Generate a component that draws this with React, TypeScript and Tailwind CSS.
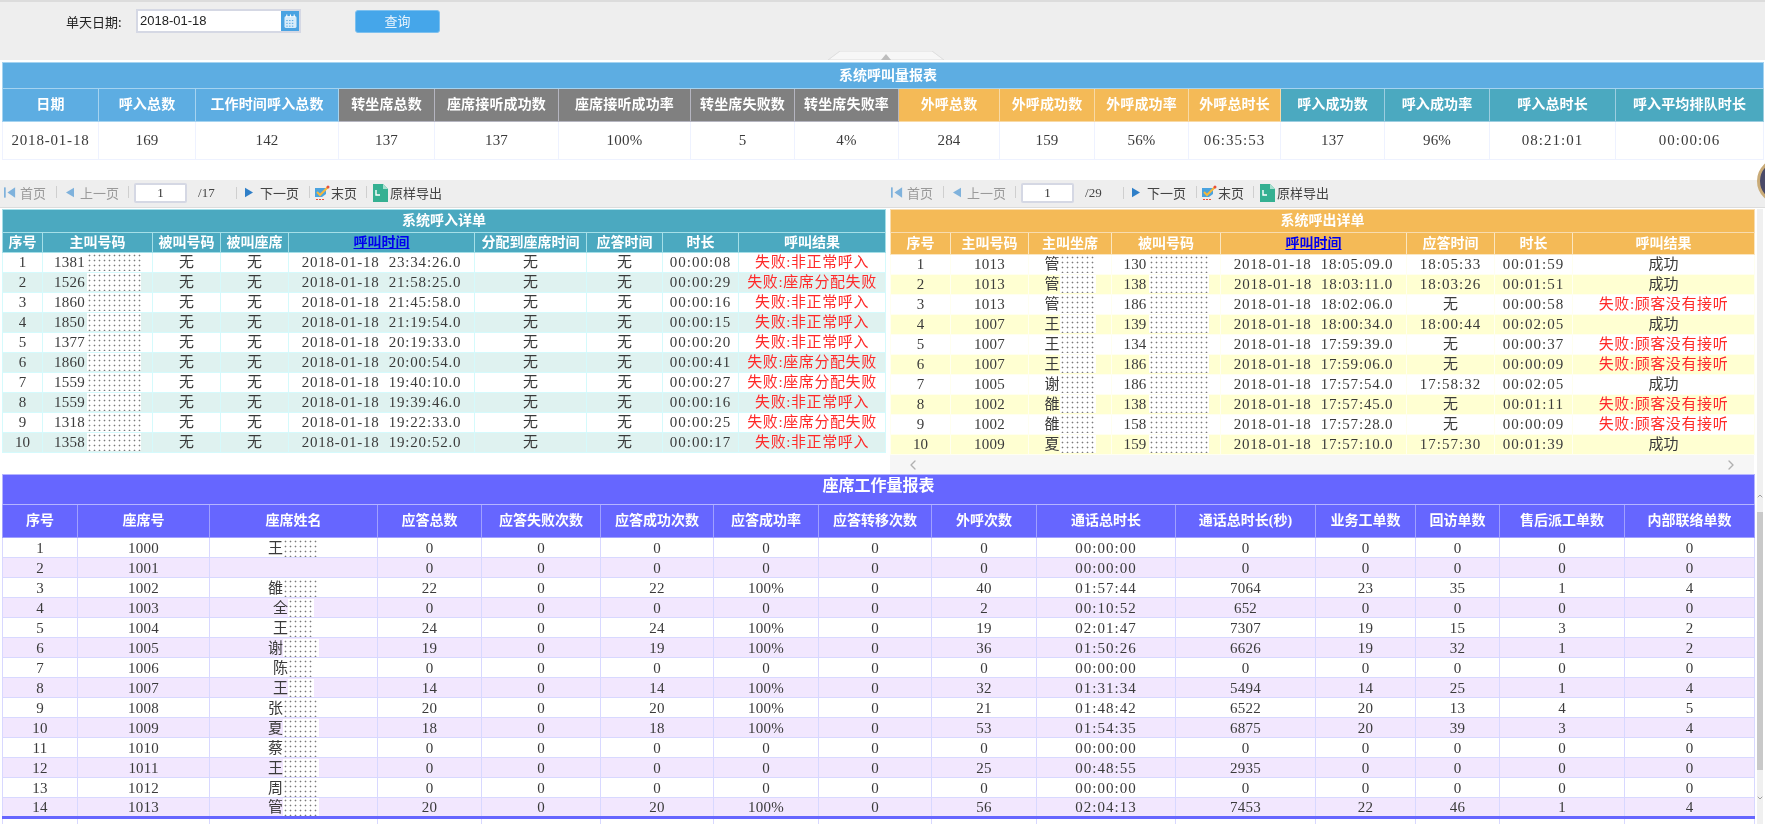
import React from "react";
import { ChevronLeft, ChevronRight, ChevronUp, ChevronDown } from "lucide-react";

const serif = "font-['Liberation_Serif','Noto_Sans_CJK_SC',serif]";

function tracking(s: string) {
  if (/^\d{4}-\d\d-\d\d/.test(s)) return "tracking-[0.8px]";
  if (/^\d\d:\d\d:\d\d/.test(s)) return "tracking-[1px]";
  if (/^\d/.test(s)) return "tracking-[0.2px]";
  return "";
}

function Txt({ v }: { v: string }) {
  return <span className={tracking(v)}>{v}</span>;
}

/* Masked fragment of a personal value, as blotted out in the picture */
function Mask({ w }: { w: string }) {
  return (
    <span
      className={`inline-block h-[18px] bg-white bg-[radial-gradient(circle,#7a7a7a_0.75px,transparent_1.1px)] bg-[length:5px_5px] ${w}`}
    />
  );
}

function Masked({ head, w }: { head: string; w: string }) {
  return (
    <span className="inline-flex h-[18px] align-top items-center justify-center tracking-[0.2px]">
      {head}
      <Mask w={w} />
    </span>
  );
}

function Fail({ v }: { v: string }) {
  return <span className="text-[#ff2a2a] tracking-[0.6px]">{v}</span>;
}

const FAIL_A = "失败:非正常呼入";
const FAIL_B = "失败:座席分配失败";
const FAIL_C = "失败:顾客没有接听";

const topCols = ["w-[96px]", "w-[97px]", "w-[143px]", "w-[96px]", "w-[124px]", "w-[132px]", "w-[104px]", "w-[104px]", "w-[101px]", "w-[95px]", "w-[94px]", "w-[92px]", "w-[104px]", "w-[105px]", "w-[126px]", "w-[148px]"];
const topHeads: [string, string][] = [
  ["日期", "bg-[#5dade2] border-[#a5d3f0]"],
  ["呼入总数", "bg-[#5dade2] border-[#a5d3f0]"],
  ["工作时间呼入总数", "bg-[#5dade2] border-[#a5d3f0]"],
  ["转坐席总数", "bg-[#808080] border-[#b5b5c0]"],
  ["座席接听成功数", "bg-[#808080] border-[#b5b5c0]"],
  ["座席接听成功率", "bg-[#808080] border-[#b5b5c0]"],
  ["转坐席失败数", "bg-[#808080] border-[#b5b5c0]"],
  ["转坐席失败率", "bg-[#808080] border-[#b5b5c0]"],
  ["外呼总数", "bg-[#f4ba57] border-[#f8d9a5]"],
  ["外呼成功数", "bg-[#f4ba57] border-[#f8d9a5]"],
  ["外呼成功率", "bg-[#f4ba57] border-[#f8d9a5]"],
  ["外呼总时长", "bg-[#f4ba57] border-[#f8d9a5]"],
  ["呼入成功数", "bg-[#4ba9c0] border-[#9ccde0]"],
  ["呼入成功率", "bg-[#4ba9c0] border-[#9ccde0]"],
  ["呼入总时长", "bg-[#4ba9c0] border-[#9ccde0]"],
  ["呼入平均排队时长", "bg-[#4ba9c0] border-[#9ccde0]"],
];
const topRow = ["2018-01-18", "169", "142", "137", "137", "100%", "5", "4%", "284", "159", "56%", "06:35:53", "137", "96%", "08:21:01", "00:00:06"];

const leftCols = ["w-[40px]", "w-[110px]", "w-[68px]", "w-[68px]", "w-[186px]", "w-[112px]", "w-[76px]", "w-[76px]", "w-[147px]"];
const leftHeads = ["序号", "主叫号码", "被叫号码", "被叫座席", "呼叫时间", "分配到座席时间", "应答时间", "时长", "呼叫结果"];
const leftRows: [string, string, string, string][] = [
  ["1381", "23:34:26.0", "00:00:08", FAIL_A],
  ["1526", "21:58:25.0", "00:00:29", FAIL_B],
  ["1860", "21:45:58.0", "00:00:16", FAIL_A],
  ["1850", "21:19:54.0", "00:00:15", FAIL_A],
  ["1377", "20:19:33.0", "00:00:20", FAIL_A],
  ["1860", "20:00:54.0", "00:00:41", FAIL_B],
  ["1559", "19:40:10.0", "00:00:27", FAIL_B],
  ["1559", "19:39:46.0", "00:00:16", FAIL_A],
  ["1318", "19:22:33.0", "00:00:25", FAIL_B],
  ["1358", "19:20:52.0", "00:00:17", FAIL_A],
];

const rightCols = ["w-[60px]", "w-[78px]", "w-[83px]", "w-[109px]", "w-[186px]", "w-[88px]", "w-[78px]", "w-[182px]"];
const rightHeads = ["序号", "主叫号码", "主叫坐席", "被叫号码", "呼叫时间", "应答时间", "时长", "呼叫结果"];
const rightRows: [string, string, string, string, string, string, string][] = [
  ["1013", "管", "130", "18:05:09.0", "18:05:33", "00:01:59", "成功"],
  ["1013", "管", "138", "18:03:11.0", "18:03:26", "00:01:51", "成功"],
  ["1013", "管", "186", "18:02:06.0", "无", "00:00:58", FAIL_C],
  ["1007", "王", "139", "18:00:34.0", "18:00:44", "00:02:05", "成功"],
  ["1007", "王", "134", "17:59:39.0", "无", "00:00:37", FAIL_C],
  ["1007", "王", "186", "17:59:06.0", "无", "00:00:09", FAIL_C],
  ["1005", "谢", "186", "17:57:54.0", "17:58:32", "00:02:05", "成功"],
  ["1002", "雒", "138", "17:57:45.0", "无", "00:01:11", FAIL_C],
  ["1002", "雒", "158", "17:57:28.0", "无", "00:00:09", FAIL_C],
  ["1009", "夏", "159", "17:57:10.0", "17:57:30", "00:01:39", "成功"],
];

const botCols = ["w-[75px]", "w-[132px]", "w-[168px]", "w-[104px]", "w-[119px]", "w-[113px]", "w-[105px]", "w-[113px]", "w-[105px]", "w-[139px]", "w-[140px]", "w-[100px]", "w-[84px]", "w-[125px]", "w-[130px]"];
const botHeads = ["序号", "座席号", "座席姓名", "应答总数", "应答失败次数", "应答成功次数", "应答成功率", "应答转移次数", "外呼次数", "通话总时长", "通话总时长(秒)", "业务工单数", "回访单数", "售后派工单数", "内部联络单数"];
const botRows: string[][] = [
  ["1", "1000", "王|3", "0", "0", "0", "0", "0", "0", "00:00:00", "0", "0", "0", "0", "0"],
  ["2", "1001", "", "0", "0", "0", "0", "0", "0", "00:00:00", "0", "0", "0", "0", "0"],
  ["3", "1002", "雒|3", "22", "0", "22", "100%", "0", "40", "01:57:44", "7064", "23", "35", "1", "4"],
  ["4", "1003", "全|2", "0", "0", "0", "0", "0", "2", "00:10:52", "652", "0", "0", "0", "0"],
  ["5", "1004", "王|2", "24", "0", "24", "100%", "0", "19", "02:01:47", "7307", "19", "15", "3", "2"],
  ["6", "1005", "谢|3", "19", "0", "19", "100%", "0", "36", "01:50:26", "6626", "19", "32", "1", "2"],
  ["7", "1006", "陈|2", "0", "0", "0", "0", "0", "0", "00:00:00", "0", "0", "0", "0", "0"],
  ["8", "1007", "王|2", "14", "0", "14", "100%", "0", "32", "01:31:34", "5494", "14", "25", "1", "4"],
  ["9", "1008", "张|3", "20", "0", "20", "100%", "0", "21", "01:48:42", "6522", "20", "13", "4", "5"],
  ["10", "1009", "夏|3", "18", "0", "18", "100%", "0", "53", "01:54:35", "6875", "20", "39", "3", "4"],
  ["11", "1010", "蔡|3", "0", "0", "0", "0", "0", "0", "00:00:00", "0", "0", "0", "0", "0"],
  ["12", "1011", "王|3", "0", "0", "0", "0", "0", "25", "00:48:55", "2935", "0", "0", "0", "0"],
  ["13", "1012", "周|3", "0", "0", "0", "0", "0", "0", "00:00:00", "0", "0", "0", "0", "0"],
  ["14", "1013", "管|3", "20", "0", "20", "100%", "0", "56", "02:04:13", "7453", "22", "46", "1", "4"],
];

function Sep() {
  return <span className="inline-block w-px h-[12px] bg-[#cfcfcf]" />;
}

function Pager({ total, width }: { total: string; width: string }) {
  return (
    <div className={`flex items-center h-full pb-[2px] text-[13px] leading-none font-['Noto_Sans_CJK_SC',sans-serif] ${width}`}>
      <svg viewBox="0 0 14 14" className="w-[12px] h-[13px] ml-[4px] shrink-0">
        <rect x="0" y="1" width="2" height="12" fill="#7fb2dc" />
        <path d="M13 1 L4 7 L13 13 Z" fill="#7fb2dc" />
      </svg>
      <span className="ml-[4px] w-[26px] text-[#9a9a9a]">首页</span>
      <span className="ml-[10px]"><Sep /></span>
      <svg viewBox="0 0 10 14" className="w-[8px] h-[13px] ml-[9px] shrink-0">
        <path d="M10 1 L0 7 L10 13 Z" fill="#7fb2dc" />
      </svg>
      <span className="ml-[6px] w-[39px] text-[#9a9a9a]">上一页</span>
      <span className="ml-[9px]"><Sep /></span>
      <span className={`ml-[5px] w-[53px] h-[20px] border-2 border-[#d5d8e4] rounded-[2px] bg-white flex items-center justify-center text-[13px] text-[#333] ${serif}`}>1</span>
      <span className={`ml-[11px] w-[38px] text-[13px] text-[#444] ${serif}`}>/{total}</span>
      <Sep />
      <svg viewBox="0 0 10 14" className="w-[8px] h-[13px] ml-[8px] shrink-0">
        <path d="M0 1 L10 7 L0 13 Z" fill="#2f7fc8" />
      </svg>
      <span className="ml-[7px] w-[39px] text-[#444]">下一页</span>
      <span className="ml-[10px]"><Sep /></span>
      <svg viewBox="0 0 16 16" className="w-[16px] h-[16px] ml-[4px] shrink-0">
        <path d="M1 3 H12 V9 L8 12 H1 Z" fill="#4aa3df" />
        <path d="M3 7 L6 10 L14 2" stroke="#f5b83d" strokeWidth="2" fill="none" />
        <circle cx="14" cy="2" r="1.5" fill="#e8503a" />
        <path d="M2 14.5 H11" stroke="#e8503a" strokeWidth="1" strokeDasharray="2 1" />
      </svg>
      <span className="ml-[1px] w-[26px] text-[#444]">末页</span>
      <span className="ml-[9px]"><Sep /></span>
      <svg viewBox="0 0 16 18" className="w-[16px] h-[18px] ml-[5px] shrink-0">
        <path d="M1 0 H11 L16 5 V18 H1 Z" fill="#35b092" />
        <path d="M11 0 L16 5 H11 Z" fill="#a8e0d0" />
        <path d="M4 6 V11 H8" stroke="#fff" strokeWidth="1.4" fill="none" />
      </svg>
      <span className="ml-[2px] text-[#444] whitespace-nowrap">原样导出</span>
    </div>
  );
}

function Reference() {
  return <a href="#" className="font-bold text-[#0000ee] underline">呼叫时间</a>;
}

export default function App() {
  return (
    <div className={`relative w-[1765px] h-[824px] overflow-hidden bg-white text-[#3a3a3a] blur-[0.45px] ${serif}`}>
      {/* Query bar */}
      <div className="relative h-[60px] border-t-2 border-[#dcdcdc] bg-[#eeeeee]">
        <div className="flex items-center pt-[7px] font-['Noto_Sans_CJK_SC',sans-serif]">
          <label className="ml-[66px] w-[70px] text-[13px] leading-[23px] text-[#222]">单天日期:</label>
          <div className="flex w-[165px] h-[24px] border-2 border-[#d5d8e4] bg-white">
            <input
              readOnly
              value="2018-01-18"
              className="w-[143px] pl-[2px] text-[13px] leading-[20px] text-[#222] font-['Liberation_Sans',sans-serif] outline-none bg-white"
            />
            <span className="flex-1 bg-[#4aa3e2] flex items-center justify-center">
              <svg viewBox="0 0 14 16" className="w-[13px] h-[15px]">
                <rect x="0.5" y="2" width="13" height="13" rx="2" fill="#d8ecfa" />
                <path d="M3 0.5 V3.5 M7 0.5 V3.5 M11 0.5 V3.5" stroke="#fff" strokeWidth="1.2" />
                <path d="M2.5 7 H11.5 M2.5 10 H11.5 M2.5 13 H11.5" stroke="#4aa3e2" strokeWidth="1" strokeDasharray="1.5 1.5" />
              </svg>
            </span>
          </div>
          <button className="ml-[54px] w-[85px] h-[23px] rounded-[3px] bg-[#45a6ea] border border-[#7cc0ef] text-[13px] text-[#e8f4fd]">
            查询
          </button>
        </div>
        <svg viewBox="0 0 116 9" className="absolute left-[828px] bottom-0 w-[116px] h-[9px]">
          <path d="M0 9 L12 0 H104 L116 9 Z" fill="#f7f7f7" stroke="#dddddd" strokeWidth="1" />
          <path d="M53 9 L58 3 L63 9 Z" fill="#bdbdbd" />
        </svg>
      </div>

      {/* System call volume report */}
      <table className="table-fixed border-collapse w-[1761px] mt-[2px] ml-[2px] text-center">
        <colgroup>{topCols.map((c, i) => <col key={i} className={c} />)}</colgroup>
        <thead>
          <tr className="h-[26px]">
            <th colSpan={16} className="pl-[10px] pb-[1px] bg-[#5dade2] border border-[#a5d3f0] text-[14px] font-bold text-white">
              系统呼叫量报表
            </th>
          </tr>
          <tr className="h-[33px]">
            {topHeads.map(([h, c]) => (
              <th key={h} className={`border pb-[1px] text-[14px] tracking-[0.15px] font-bold text-white whitespace-nowrap ${c}`}>{h}</th>
            ))}
          </tr>
        </thead>
        <tbody>
          <tr className="h-[38px]">
            {topRow.map((v, i) => (
              <td key={i} className="border border-[#eef2ff] text-[15px]"><Txt v={v} /></td>
            ))}
          </tr>
        </tbody>
      </table>

      {/* Pagers */}
      <div className="flex h-[28px] mt-[20px] bg-[#eeeeee] border-b border-[#dcdcdc]">
        <Pager total="17" width="w-[887px]" />
        <Pager total="29" width="flex-1" />
      </div>

      {/* Lower area with page scrollbar */}
      <div className="flex mt-[1px]">
        <div className="w-[1754px]">
          <div className="flex h-[265px]">
            {/* Inbound */}
            <div className="w-[883px] ml-[2px]">
              <table className="table-fixed border-collapse w-full text-center">
                <colgroup>{leftCols.map((c, i) => <col key={i} className={c} />)}</colgroup>
                <thead>
                  <tr className="h-[23px]">
                    <th colSpan={9} className="bg-[#4ba9c0] border border-[#a5dfe8] text-[14px] leading-[20px] font-bold text-white">系统呼入详单</th>
                  </tr>
                  <tr className="h-[20px]">
                    {leftHeads.map((h) => (
                      <th key={h} className="bg-[#4ba9c0] border border-[#a5dfe8] text-[14px] leading-[18px] font-bold text-white whitespace-nowrap">
                        {h === "呼叫时间" ? <Reference /> : h}
                      </th>
                    ))}
                  </tr>
                </thead>
                <tbody>
                  {leftRows.map((r, i) => (
                    <tr key={i} className={`h-[20px] text-[15px] leading-[18px] ${i % 2 ? "bg-[#dff2f0]" : "bg-white"}`}>
                      <td className="pb-[1px] border border-[#d5fafc]">{i + 1}</td>
                      <td className="pb-[1px] border border-[#d5fafc]"><Masked head={r[0]} w="w-[54px] ml-[2px]" /></td>
                      <td className="pb-[1px] border border-[#d5fafc]">无</td>
                      <td className="pb-[1px] border border-[#d5fafc]">无</td>
                      <td className="pb-[1px] border border-[#d5fafc] whitespace-nowrap"><Txt v={`2018-01-18\u00a0 ${r[1]}`} /></td>
                      <td className="pb-[1px] border border-[#d5fafc]">无</td>
                      <td className="pb-[1px] border border-[#d5fafc]">无</td>
                      <td className="pb-[1px] border border-[#d5fafc]"><Txt v={r[2]} /></td>
                      <td className="pb-[1px] border border-[#d5fafc]"><Fail v={r[3]} /></td>
                    </tr>
                  ))}
                </tbody>
              </table>
            </div>
            {/* Outbound */}
            <div className="w-[864px] ml-[5px] flex flex-col">
              <table className="table-fixed border-collapse w-full text-center">
                <colgroup>{rightCols.map((c, i) => <col key={i} className={c} />)}</colgroup>
                <thead>
                  <tr className="h-[23px]">
                    <th colSpan={8} className="bg-[#f4ba57] border border-[#f8dcae] text-[14px] leading-[20px] font-bold text-white">系统呼出详单</th>
                  </tr>
                  <tr className="h-[22px]">
                    {rightHeads.map((h) => (
                      <th key={h} className="bg-[#f4ba57] border border-[#fbe6c0] text-[14px] leading-[18px] font-bold text-white whitespace-nowrap">
                        {h === "呼叫时间" ? <Reference /> : h}
                      </th>
                    ))}
                  </tr>
                </thead>
                <tbody>
                  {rightRows.map((r, i) => (
                    <tr key={i} className={`h-[20px] text-[15px] leading-[18px] ${i % 2 ? "bg-[#ffffd2]" : "bg-white"}`}>
                      <td className="pb-[1px] border border-[#fffff0]">{i + 1}</td>
                      <td className="pb-[1px] border border-[#fffff0]"><Txt v={r[0]} /></td>
                      <td className="pb-[1px] border border-[#fffff0]"><Masked head={r[1]} w="w-[36px]" /></td>
                      <td className="pb-[1px] border border-[#fffff0] whitespace-nowrap"><Masked head={r[2]} w="w-[60px] ml-[2px]" /></td>
                      <td className="pb-[1px] border border-[#fffff0] whitespace-nowrap"><Txt v={`2018-01-18\u00a0 ${r[3]}`} /></td>
                      <td className="pb-[1px] border border-[#fffff0]"><Txt v={r[4]} /></td>
                      <td className="pb-[1px] border border-[#fffff0]"><Txt v={r[5]} /></td>
                      <td className="pb-[1px] border border-[#fffff0]">{r[6].startsWith("失败") ? <Fail v={r[6]} /> : r[6]}</td>
                    </tr>
                  ))}
                </tbody>
              </table>
              <div className="flex-1 flex items-center justify-between px-[15px] bg-[#f6f6f6] text-[#b0b0b0]">
                <ChevronLeft size={16} strokeWidth={2} />
                <ChevronRight size={16} strokeWidth={2} />
              </div>
            </div>
          </div>

          {/* Agent workload */}
          <table className="table-fixed border-collapse w-[1752px] ml-[2px] text-center">
            <colgroup>{botCols.map((c, i) => <col key={i} className={c} />)}</colgroup>
            <thead>
              <tr className="h-[30px]">
                <th colSpan={15} className="pb-[8px] bg-[#6666ff] border border-[#b5b5ff] text-[16px] leading-[20px] font-bold text-white">座席工作量报表</th>
              </tr>
              <tr className="h-[33px]">
                {botHeads.map((h) => (
                  <th key={h} className="pb-[1px] bg-[#6666ff] border border-[#a0a0ff] text-[14px] font-bold text-white whitespace-nowrap">{h}</th>
                ))}
              </tr>
            </thead>
            <tbody>
              {botRows.map((r, i) => (
                <tr key={i} className={`h-[20px] text-[15px] leading-[18px] ${i % 2 ? "bg-[#f2e7fe]" : "bg-white"}`}>
                  {r.map((v, j) => (
                    <td key={j} className="border border-[#d8d8ff]">
                      {j === 2 && v ? (
                        <Masked head={v.split("|")[0]} w={v.endsWith("3") ? "w-[36px]" : "w-[26px]"} />
                      ) : (
                        <Txt v={v} />
                      )}
                    </td>
                  ))}
                </tr>
              ))}
              <tr className="h-[7px]">
                {botCols.map((c) => (
                  <td key={c} className="border-x border-[#d8d8ff] border-t-[3px] border-t-[#6666ff]" />
                ))}
              </tr>
            </tbody>
          </table>
        </div>

        {/* Page scrollbar */}
        <div className="w-[6px] ml-[3px] bg-[#f0f0f0] flex flex-col items-center text-[#777]">
          <ChevronUp size={8} strokeWidth={2} className="mt-[283px]" />
          <div className="w-full h-[258px] mt-[12px] bg-[#c9c9c9]" />
          <ChevronDown size={8} strokeWidth={2} className="mt-[24px]" />
        </div>
      </div>

      {/* Partly visible floating ball at the right edge */}
      <div className="absolute left-[1757px] top-[158px] w-[46px] h-[46px] rounded-full bg-[#4a4a68] border-[3px] border-[#c9ab78]" />
    </div>
  );
}
